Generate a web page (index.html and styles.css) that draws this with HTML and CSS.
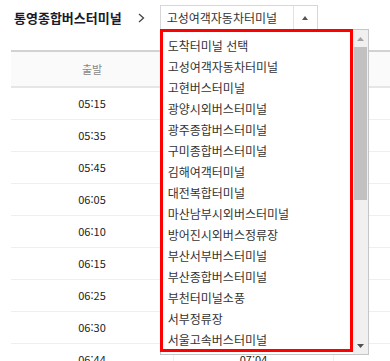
FILE: index.html
```html
<!DOCTYPE html>
<html lang="ko">
<head>
  <meta charset="UTF-8">
  <meta name="viewport" content="width=device-width, initial-scale=1.0">
  <title>시간표 조회</title>
  <link rel="stylesheet" href="styles.css">
</head>
<body>
  <div class="route">
    <h2 class="from">통영종합버스터미널</h2>
    <svg class="chevron" width="7" height="10" viewBox="0 0 7 10"><path d="M1 1 L5.5 5 L1 9" fill="none" stroke="#444" stroke-width="1.3"/></svg>

    <div class="select">
      <span class="select-value">고성여객자동차터미널</span>
      <span class="select-arrow"><i class="tri-up"></i></span>

      <div class="dropdown">
        <ul class="options">
          <li>도착터미널 선택</li>
          <li>고성여객자동차터미널</li>
          <li>고현버스터미널</li>
          <li>광양시외버스터미널</li>
          <li>광주종합버스터미널</li>
          <li>구미종합버스터미널</li>
          <li>김해여객터미널</li>
          <li>대전복합터미널</li>
          <li>마산남부시외버스터미널</li>
          <li>방어진시외버스정류장</li>
          <li>부산서부버스터미널</li>
          <li>부산종합버스터미널</li>
          <li>부천터미널소풍</li>
          <li>서부정류장</li>
          <li>서울고속버스터미널</li>
        </ul>
        <div class="scrollbar">
          <div class="sb-btn"><svg width="7" height="4" viewBox="0 0 7 4"><polygon points="3.5,0 7,4 0,4" fill="#a3a3a3"/></svg></div>
          <div class="sb-thumb"></div>
          <div class="sb-track"></div>
          <div class="sb-btn"><svg width="7" height="4" viewBox="0 0 7 4"><polygon points="0,0 7,0 3.5,4" fill="#505050"/></svg></div>
        </div>
      </div>
    </div>
  </div>

  <table class="timetable">
    <thead>
      <tr><th class="col-dep">출발</th><th class="col-arr">도착</th><th></th></tr>
    </thead>
    <tbody>
      <tr><td>05:15</td><td>05:35</td><td></td></tr>
      <tr><td>05:35</td><td>05:55</td><td></td></tr>
      <tr><td>05:45</td><td>06:05</td><td></td></tr>
      <tr><td>06:05</td><td>06:25</td><td></td></tr>
      <tr><td>06:10</td><td>06:30</td><td></td></tr>
      <tr><td>06:15</td><td>06:35</td><td></td></tr>
      <tr><td>06:25</td><td>06:45</td><td></td></tr>
      <tr><td>06:30</td><td>06:50</td><td></td></tr>
      <tr><td>06:44</td><td>07:04</td><td></td></tr>
    </tbody>
  </table>
</body>
</html>
```

FILE: styles.css
```css
body { margin: 0; width: 390px; overflow: hidden; background: #fff; font-family: "Noto Sans CJK KR", "Noto Sans", sans-serif; color: #333; }

.route { display: flex; align-items: center; height: 25px; padding: 5px 0 0 14px; }
.from { margin: 0; font-size: 13px; font-weight: bold; color: #1a1a2a; line-height: 25px; }
.chevron { margin-left: 16px; }

.select { position: relative; display: flex; width: 158px; height: 25px; margin-left: 15px; box-sizing: border-box; border: 1px solid #d7d7d7; background: #fff; }
.select-value { flex: 1; padding-left: 6px; font-size: 12px; line-height: 23px; color: #333; }
.select-arrow { display: flex; align-items: center; justify-content: center; width: 23px; border-left: 1px solid #e2e2e2; }
.tri-up { width: 0; height: 0; border-left: 3px solid transparent; border-right: 3px solid transparent; border-bottom: 4px solid #555; }

.dropdown { position: absolute; left: -1px; top: 23px; z-index: 10; display: flex; width: 209px; height: 326px; box-sizing: border-box; border: 1px solid #c5c5c5; background: #fff; }
.options { list-style: none; width: 193px; height: 323px; margin: -1px 0 2px -1px; padding: 3px 0 0; box-sizing: border-box; border: 3px solid #f00; overflow: hidden; }
.options li { padding-left: 5px; font-size: 12px; line-height: 21px; height: 21px; color: #333; white-space: nowrap; }

.scrollbar { display: flex; flex-direction: column; width: 15px; background: #f0f0f0; }
.sb-btn { display: flex; align-items: center; justify-content: center; height: 17px; }
.sb-thumb { height: 153px; margin: 0 1px; background: #c1c1c1; }
.sb-track { flex: 1; }

.timetable { width: 379px; margin: 20px 0 0 11px; border-spacing: 0; table-layout: fixed; }
.timetable th { padding: 0; font-size: 11px; font-weight: normal; line-height: 34px; color: #888; background: #fafafa; border-top: 2px solid #d2d2d2; border-bottom: 2px solid #e6e6e6; }
.timetable td { padding: 0; font-size: 11px; line-height: 31px; text-align: center; color: #222; border-bottom: 1px solid #efefef; }
.timetable td + td { border-left: 1px solid #f0f0f0; }
.col-dep { width: 162px; }
.col-arr { width: 160px; }
```
